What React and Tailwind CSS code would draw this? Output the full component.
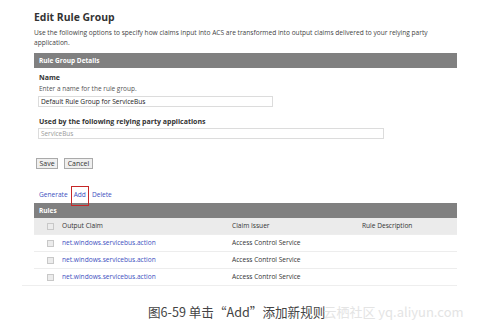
import React from "react";

const font = { fontFamily: '"Open Sans", "Noto Sans", sans-serif' };

function Box() {
  return <span className="inline-block w-[7px] h-[7px] border border-[#c8c8c8] bg-[#ececec]" />;
}

function Row({ claim, issuer, desc, header }) {
  return (
    <div
      className={
        "flex items-center h-[17px] border-b border-[#ededed] " +
        (header ? "bg-[#ebebeb] text-[#333]" : "bg-white")
      }
    >
      <div className="w-[28px] flex justify-center pl-[4px]">
        <Box />
      </div>
      <div className={"w-[170px] " + (header ? "text-[#333]" : "text-[#3d4fc0]")}>{claim}</div>
      <div className="w-[130px] text-[#333]">{issuer}</div>
      <div className="flex-1 text-[#333]">{desc}</div>
    </div>
  );
}

export default function App() {
  return (
    <div className="w-[481px] h-[325px] bg-white relative overflow-hidden" style={font}>
      <div className="pl-[34px] pr-[24px]">
        <div className="pt-[9px] h-[28px] text-[10.4px] leading-[16px] font-bold text-[#333]">
          Edit Rule Group
        </div>
        <div className="text-[6.6px] leading-[10px] text-[#444] pr-[20px]">
          Use the following options to specify how claims input into ACS are transformed into output claims delivered to your relying party application.
        </div>
        <div className="mt-[5px] h-[15px] bg-[#808080] text-white font-bold text-[6.5px] leading-[15px] pl-[5px]">
          Rule Group Details
        </div>
        <div className="pl-[5px]">
          <div className="mt-[5px] text-[7px] leading-[10px] font-bold text-[#333]">Name</div>
          <div className="mt-[1px] text-[6.5px] leading-[10px] text-[#555]">Enter a name for the rule group.</div>
          <div className="mt-[2px] -ml-[1px] w-[235px] h-[11px] border border-[#dcdcdc] text-[6.6px] leading-[9px] pl-[2px] text-[#222]">
            Default Rule Group for ServiceBus
          </div>
          <div className="mt-[10px] text-[7px] leading-[10px] font-bold text-[#333]">Used by the following relying party applications</div>
          <div className="mt-[1px] -ml-[1px] w-[346px] h-[11px] border border-[#dcdcdc] text-[6.4px] leading-[9px] pl-[2px] text-[#999]">
            ServiceBus
          </div>
        </div>
        <div className="mt-[19px] ml-[2px] flex gap-[6px] text-[7px] text-[#333]">
          <div className="h-[11px] w-[22px] border border-[#aaa] bg-[#efefef] leading-[9px] text-center">Save</div>
          <div className="h-[11px] w-[29px] border border-[#aaa] bg-[#efefef] leading-[9px] text-center">Cancel</div>
        </div>
        <div className="mt-[21px] pl-[5px] flex gap-[6px] text-[6.6px] leading-[10px] text-[#3d4fc0]">
          <span>Generate</span>
          <span className="relative">
            Add
            <span className="absolute -left-[3px] -right-[3px] -top-[4px] -bottom-[6px] border border-[#c62828]" />
          </span>
          <span>Delete</span>
        </div>
        <div className="mt-[3px] h-[15px] bg-[#808080] text-white font-bold text-[6.5px] leading-[15px] pl-[5px]">
          Rules
        </div>
        <div className="text-[6.6px]">
          <Row header claim="Output Claim" issuer="Claim Issuer" desc="Rule Description" />
          <Row claim="net.windows.servicebus.action" issuer="Access Control Service" desc="" />
          <Row claim="net.windows.servicebus.action" issuer="Access Control Service" desc="" />
          <Row claim="net.windows.servicebus.action" issuer="Access Control Service" desc="" />
        </div>
      </div>
      <div className="-mt-[1px] ml-[22px] w-[434px] h-px bg-[#eeeeee]" />
      <div className="mt-[19px] flex">
        <div
          className="ml-[148px] text-[12.6px] leading-[14px] text-[#444]"
          style={{ fontFamily: '"Noto Sans CJK SC", sans-serif' }}
        >
          图6-59 单击“Add”添加新规则
        </div>
        <div
          className="-ml-[2px] text-[13px] leading-[14px] text-[#e4e4e4]"
          style={{ fontFamily: '"Noto Sans CJK SC", sans-serif' }}
        >
          云栖社区 yq.aliyun.com
        </div>
      </div>
    </div>
  );
}
